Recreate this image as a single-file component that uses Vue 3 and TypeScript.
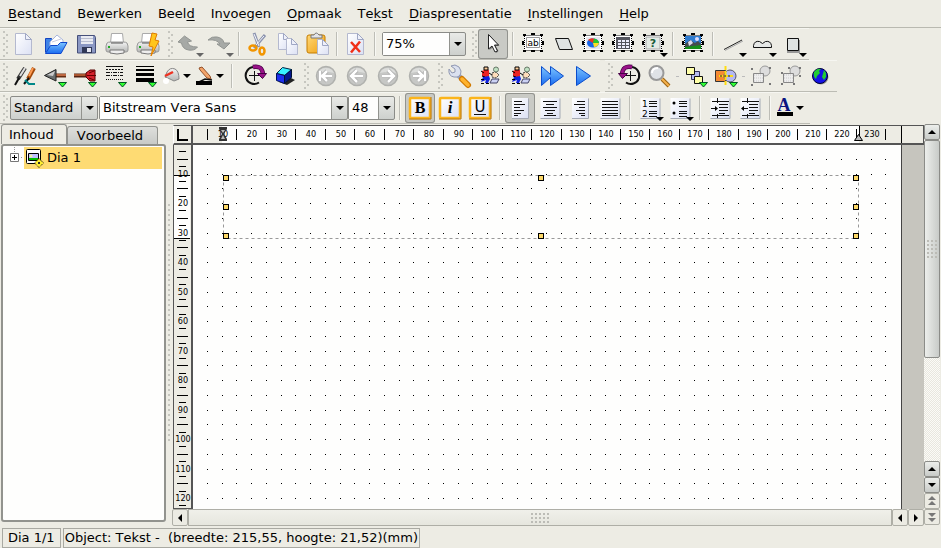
<script setup lang="ts">
import { computed, ref } from 'vue'

interface MenuEntry { before: string; key: string; after: string }
interface Tool {
  kind: 'button' | 'split' | 'sep' | 'gap' | 'dash' | 'zoom' | 'style' | 'font' | 'size'
  icon?: string
  label?: string
  pressed?: boolean
}
interface Group { wide?: boolean; tight?: boolean; spaced?: boolean; tools: Tool[] }

const menus: MenuEntry[] = [
  { before: '', key: 'B', after: 'estand' },
  { before: 'Be', key: 'w', after: 'erken' },
  { before: 'Beel', key: 'd', after: '' },
  { before: 'In', key: 'v', after: 'oegen' },
  { before: '', key: 'O', after: 'pmaak' },
  { before: 'Te', key: 'k', after: 'st' },
  { before: '', key: 'D', after: 'iaspresentatie' },
  { before: '', key: 'I', after: 'nstellingen' },
  { before: '', key: 'H', after: 'elp' },
]

const b = (icon: string, label: string, pressed = false): Tool => ({ kind: 'button', icon, label, pressed })
const split = (icon: string, label: string): Tool => ({ kind: 'split', icon, label })
const sep: Tool = { kind: 'sep' }
const dash: Tool = { kind: 'dash' }

/* Rows hold bars; a bar is one underlined strip made of groups with a grip each. */
const rows: Group[][][] = [
  [[
    { wide: true, tools: [b('new', 'Nieuw'), b('open', 'Openen'), b('save', 'Opslaan'), b('print', 'Afdrukken'), b('quick', 'Direct afdrukken')] },
    { tight: true, tools: [b('undo', 'Ongedaan maken'), b('redo', 'Opnieuw'), sep, b('cut', 'Knippen'), b('copy', 'Kopiëren'), b('paste', 'Plakken'), sep, b('remove', 'Verwijderen'), sep, { kind: 'zoom' }] },
    { spaced: true, tools: [b('pointer', 'Selecteren', true), sep, b('textframe', 'Tekst'), b('shape', 'Autovorm'), b('chart', 'Diagram'), b('table', 'Tabel'), b('object', 'Object'), sep, b('picture', 'Afbeelding'), sep, b('line', 'Lijn'), b('curve', 'Kromme'), b('square', 'Rechthoek')] },
  ]],
  [[
    { tools: [b('brushes', 'Pen en penseel'), b('arrowstart', 'Pijlbegin'), b('arrowend', 'Pijleinde'), b('dashes', 'Lijnstijl'), b('weights', 'Lijndikte'), split('bucket', 'Vulkleur'), split('pen', 'Lijnkleur'), sep, { kind: 'gap' }, b('rotate', 'Draaien'), b('cube', 'Schaduw')] },
    { wide: true, tools: [b('first', 'Eerste dia'), b('prev', 'Vorige dia'), b('next', 'Volgende dia'), b('last', 'Laatste dia')] },
    { wide: true, tools: [b('wrench', 'Instellen'), b('effect', 'Effect'), b('effect', 'Overgang'), b('forward', 'Vanaf begin'), b('play', 'Afspelen')] },
  ], [
    { tools: [b('rotateback', 'Draaien'), b('magnify', 'Zoomen'), dash, b('stack', 'Volgorde'), b('align', 'Uitlijnen'), dash, b('group', 'Groeperen'), b('ungroup', 'Degroeperen'), b('globe', 'Koppeling')] },
  ]],
  [[
    { tools: [{ kind: 'style' }, { kind: 'font' }, { kind: 'size' }, sep, b('bold', 'Vet', true), b('italic', 'Cursief'), b('underline', 'Onderstrepen'), sep, b('left', 'Links', true), b('center', 'Centreren'), b('right', 'Rechts'), b('justify', 'Uitvullen'), sep, b('numbers', 'Nummering'), b('bullets', 'Opsomming'), sep, b('indent', 'Inspringen'), b('outdent', 'Uitspringen'), sep, split('color', 'Tekstkleur')] },
  ]],
]

const down = (x: number, y: number, fill = '#000') =>
  `<path d="M${x - 4} ${y - 2}h8l-4 4z" fill="${fill}"/>`
const green = `<path d="M19.5 21.5h8l-4 4.5z" fill="#3f3" stroke="#052"/>`
const doc = (x: number, y: number, w: number, h: number) =>
  `<path d="M${x + 0.5} ${y + 0.5}h${w - 7}l6 6v${h - 7}h-${w - 1}z" fill="url(#paper)" stroke="#b4b9cf"/><path d="M${x + w - 6.5} ${y + 0.5}v6h6z" fill="#eef0fa" stroke="#9fa7c4"/>`
const frame = `<rect x="6" y="6" width="18" height="15" fill="#fff"/><path d="M5.500 6.500H25M5.500 21.500H25M6.500 5V22M23.500 5V22" stroke="#000" stroke-dasharray="1 1"/><path d="M5 5h3v2H5zM13 4h4v2h-4zM22 5h3v2h-3zM5 21h3v2H5zM13 21h4v2h-4zM22 21h3v2h-3zM4 12h2v4H4zM24 12h2v4h-2z" fill="#000"/>`
const printer = `<path d="M8.500 14l1-9.500h11l1 9.500z" fill="#fff" stroke="#aaa"/><path d="M5 14q1-1 4-1h12q3 0 4 1l1 3v4q0 2-2 2H6q-2 0-2-2v-4z" fill="url(#steel)" stroke="#999"/><path d="M9 14h12" stroke="#555"/><path d="M8 21h14v3q-7 2-14 0z" fill="#eee" stroke="#777"/><path d="M6 18h2" stroke="#2a2" stroke-width="2"/>`
const nav = (d: string) =>
  `<circle cx="16" cy="15" r="9.500" fill="#c6c7c5" stroke="#b0b1ae" stroke-width="1.500"/><path d="M8 12q2-5 8-5 6 0 8 5-8-2-16 0z" fill="#dcdddb"/><path d="${d}" fill="none" stroke="#aaa" stroke-width="4"/><path d="${d}" fill="none" stroke="#fff" stroke-width="2.500"/>`
const fmt = `<rect x="5" y="5" width="20" height="20" rx="1" fill="url(#paper)" stroke="#fbb51c" stroke-width="2.500"/><path d="M4 26h22V4" fill="none" stroke="#b87410"/>`
const sheet = (w: number) =>
  `<path d="M${15 - w / 2} 5h${w}v20h-${w}z" fill="url(#paper)"/><path d="M${15 - w / 2} 25.500h${w + 0.5}v-20" fill="none" stroke="#a4a9b4"/>`
const person = `<path d="M7 10l4-2 3 1v6l-4 2-3-2z" fill="#e22"/><path d="M6 10l3 2M7 15l3 1M14 12l3 2" stroke="#000"/><path d="M9 6h4v3H9z" fill="#fc9" stroke="#000"/><path d="M8 16l6-1 1 3-2 4h-3l1-3-5 2z" fill="#12d"/><path d="M6 18.500h3M6 22.500h3M11 22.500h3" stroke="#000"/><path d="M17 12l4-1 3 3-3 3-4-1z" fill="#fdb" stroke="#333" stroke-dasharray="2 1"/><circle cx="21" cy="8.500" r="2.500" fill="#bfe0c2" stroke="#676"/><path d="M17 18h7l-2 4h-7z" fill="#ccd2f4" stroke="#446"/>`
const rotate = (flip: boolean) =>
  `<g${flip ? ' transform="translate(31 0) scale(-1 1)"' : ''}><path d="M19 21.500A8.500 8.500 0 1 1 14 6" fill="none" stroke="#111" stroke-width="2"/><path d="M13 6q9-2 10 7" fill="none" stroke="#404" stroke-width="4.500"/><path d="M13 6q9-2 10 7" fill="none" stroke="#918" stroke-width="3"/><path d="M17.500 12.500h9l-4 5z" fill="#918" stroke="#404"/><path d="M9 14.500h10M14.500 10v10" stroke="#111"/></g>`
const grouped = (link: string) =>
  `<circle cx="19" cy="10" r="5" fill="#ddd" stroke="#999"/><path d="M7.500 12.500h10v9h-10z" fill="#eee" stroke="#888"/><path d="M8 14h9M8 17h9M8 20h9" stroke="#ccc" stroke-dasharray="1 1"/><path d="${link}" fill="#777"/>`

const icons: Record<string, string> = {
  new: doc(6, 4, 17, 22),
  open: `<path d="M5.500 23.500v-14h6l2 2h7v6" fill="#3f83e6" stroke="#1444c0"/><path d="M10 13l7-7 6 5v7H10z" fill="#fff" stroke="#a8b6dc"/><path d="M12 13l9-3" stroke="#ccd"/><path d="M5.500 24.500l5-8h7l3-3h6.500l-6 11z" fill="url(#blue)" stroke="#1048cc"/>`,
  save: `<path d="M6.500 6.500h17l1 2v15.500h-18z" fill="#8b98c4" stroke="#46507a"/><path d="M10 7h12v8H10z" fill="#e9ebf2"/><path d="M10 9.500h12M10 12.500h12" stroke="#b9bed0"/><path d="M11 18h10v6H11z" fill="#303857"/><path d="M16 19h4v4h-4z" fill="#e6e8f2"/>`,
  print: printer,
  quick: printer + `<path d="M19 4l5 1-2 6 4 1-8 15 2-9-4-1z" fill="#ffc51c" stroke="#e07c00"/>`,
  undo: `<path d="M4 13l6.500-6 7 5-4 1q1 5 10 5-3 4-9 3-6-1-7-7z" fill="#a6a9a6" stroke="#929592"/>` + down(26, 26, '#666'),
  redo: `<path d="M4 11q4-4 9-3 6 1 7 6h6l-6 6-7-5h3q-3-5-12-4z" fill="#a6a9a6" stroke="#929592"/>` + down(26, 26, '#666'),
  cut: `<path d="M12 4l5 14M23 6L12 19" stroke="#8b93ae" stroke-width="3"/><path d="M12 5l5 12M22 7l-8 9" stroke="#f4f6fd"/><ellipse cx="11" cy="19" rx="3.500" ry="2.500" fill="none" stroke="#f29500" stroke-width="2.500"/><ellipse cx="20" cy="22" rx="2.500" ry="3.500" fill="none" stroke="#f29500" stroke-width="2.500"/>`,
  copy: doc(6, 4, 12, 17) + doc(14, 9, 12, 17),
  paste: `<rect x="5" y="6" width="18" height="18" rx="2" fill="url(#amber)" stroke="#c47c00"/><path d="M9 9V6h3q2-4 5 0h3v3z" fill="#e2e4ea" stroke="#777"/>` + doc(15, 10, 12, 16),
  remove: doc(7, 4, 17, 22) + `<path d="M11 13l9 10M20 12.500l-9 11" stroke="#f03018" stroke-width="2.500"/>`,
  pointer: `<path d="M11.500 6v15l4-3 3 6 2-2-3-5h4z" fill="#777"/><path d="M10.500 5.500v14.500l3.500-3 3 6 2.500-1-3-6h4z" fill="#fff" stroke="#222"/>`,
  textframe: frame + `<path d="M8.500 8.500h13v10h-13z" fill="#fff" stroke="#999"/><text x="15" y="17" font-size="9" text-anchor="middle">ab</text>`,
  shape: `<path d="M7.500 9.500h13l4 11h-13z" fill="#dfe3e3" stroke="#111"/>`,
  chart: frame + `<rect x="8" y="8" width="14" height="12" fill="#e8e8ee"/><ellipse cx="15" cy="14" rx="6" ry="4.500" fill="#1664e8"/><path d="M15 14L10 11q3-3 7-1z" fill="#e32"/><path d="M15 14l1-4.500q5 1 5 4.500z" fill="#29c62f"/><path d="M15 14h6q-1 4-5 4z" fill="#fd2"/>`,
  table: frame + `<path d="M8 8h14v12H8z" fill="#54555e"/><path d="M10 11h3v2h-3zM14 11h3v2h-3zM18 11h3v2h-3zM10 14h3v2h-3zM14 14h3v2h-3zM18 14h3v2h-3zM10 17h3v2h-3zM14 17h3v2h-3zM18 17h3v2h-3z" fill="#eef"/>`,
  object: frame + `<rect x="8" y="8" width="14" height="12" fill="#e3eae4" stroke="#aaa"/><text x="15" y="18" font-size="11" font-weight="bold" text-anchor="middle" fill="#175b38">?</text>` + down(26, 26),
  picture: frame + `<path d="M7 7h16v8H7z" fill="#2f7cd0"/><path d="M7 15l5-4 5 3 3-2 3 3v3H7z" fill="#454c50"/><circle cx="19" cy="10" r="2" fill="#ddf"/><path d="M10 13l3-2 2 3-4 3z" fill="#dde"/><path d="M7 18l16-2v4H7z" fill="#15901b"/>`,
  line: `<path d="M6 20.500L24 11" stroke="#222"/><path d="M7 21.500L25 12" stroke="#aaa"/>` + down(25, 26),
  curve: `<path d="M5.500 18.500v-2q1-5 6-4l3 2 3-2q5-1 6 4v2z" fill="#e6e8e6" stroke="#111"/>` + down(25, 26),
  square: `<path d="M21 11v12H9" fill="none" stroke="#999" stroke-width="2"/><path d="M9.500 9.500h11v12h-11z" fill="#dfe3e3" stroke="#111"/>` + down(25, 26),
  brushes: `<path d="M16 7L9 18" stroke="#333" stroke-width="4"/><path d="M16 7l-5 8" stroke="#ddd" stroke-width="2"/><path d="M10 17l-4 7" stroke="#111" stroke-width="2"/><path d="M25 7l-6 11" stroke="#a24a0c" stroke-width="4"/><path d="M24 7l-4 8" stroke="#ff9b52" stroke-width="2"/><path d="M20 17l-5 6" stroke="#111" stroke-width="2"/><path d="M16 19l4 4h6" fill="none" stroke="#088" stroke-width="2"/>`,
  arrowstart: `<path d="M16 14.500h11" stroke="#642c12" stroke-width="4"/><path d="M16 14h11" stroke="#bd6841" stroke-width="2"/><path d="M5.500 14.500L17 8.500v11.500z" fill="#6b7070" stroke="#222"/><path d="M8 14l8-4-2 5z" fill="#ccc"/>` + green,
  arrowend: `<path d="M5 14.500h13" stroke="#532010" stroke-width="4"/><path d="M5 14h13" stroke="#aa552e" stroke-width="2"/><path d="M17 12l4-3h5v11h-5l-4-4z" fill="#d5222d" stroke="#500"/><path d="M18 14.500h9M20 12l5-2M20 17l5 2" stroke="#600"/>` + green,
  dashes: `<path d="M7 5.500h17" stroke="#111"/><path d="M7 8.500h17" stroke="#111" stroke-dasharray="2 1"/><path d="M7 11.500h17M7 14.500h17" stroke="#111" stroke-dasharray="4 1 1 1"/><path d="M7 18.500h17" stroke="#111" stroke-dasharray="1 1"/>` + green,
  weights: `<path d="M7 5.500h18" stroke="#000"/><path d="M7 9h18" stroke="#000" stroke-width="2"/><path d="M7 13.500h18" stroke="#000" stroke-width="3"/><path d="M7 19h18" stroke="#000" stroke-width="4"/>` + green,
  bucket: `<path d="M6 16l2-5q3-5 8-3 4 2 4 10l-5 2-4-2z" fill="url(#steel)" stroke="#888"/><path d="M6 15l8-4" stroke="#e32" stroke-width="2.500"/><circle cx="7" cy="20" r="3" fill="#fff"/>` + down(28, 15),
  pen: `<path d="M6 7l3-1 8 9 1 3-4-1-7-8z" fill="#f3a46a" stroke="#93512a"/><path d="M4 22l8-4 7 1" fill="none" stroke="#111" stroke-width="1.500"/><path d="M3 20h16v4H3z" fill="#000"/>` + down(27, 15),
  rotate: rotate(false),
  rotateback: rotate(true),
  cube: `<path d="M9 21l8 3 8-5-4-2z" fill="#222"/><path d="M6.500 12.500l6-6 9 2-6 6z" fill="#38f1ff" stroke="#024"/><path d="M6.500 12.500l8 2v8l-8-3z" fill="#1d2fee" stroke="#015"/><path d="M14.500 14.500l7-6v8l-7 6z" fill="#06178b" stroke="#013"/>`,
  first: nav('M10 10v10M22 15h-9M17 10l-5 5 5 5'),
  prev: nav('M22 15H11M16 9l-6 6 6 6'),
  next: nav('M10 15h11M16 9l6 6-6 6'),
  last: nav('M22 10v10M10 15h9M15 10l5 5-5 5'),
  wrench: `<path d="M11 11l9 9" stroke="#9aa4bf" stroke-width="5"/><path d="M7 5l4 3v3l-3 1-3-4q-1 7 5 8 7 1 7-6-1-5-6-6z" fill="#dbe1ef" stroke="#9098b2"/><path d="M18 18l6 6" stroke="#d07900" stroke-width="6" stroke-linecap="round"/><path d="M18 18l6 6" stroke="#ffb32e" stroke-width="3.500" stroke-linecap="round"/>`,
  effect: person,
  forward: `<path d="M4.500 5.500v19l9-8v8l13-9.500-13-9.500v8z" fill="url(#blue)" stroke="#0a4ccc"/>`,
  play: `<path d="M8.500 5.500v19l14-9.500z" fill="url(#blue)" stroke="#0a4ccc"/>`,
  magnify: `<path d="M18 18l7 7" stroke="#9c6412" stroke-width="4"/><path d="M18 18l7 7" stroke="#f5b14c" stroke-width="2"/><circle cx="12.500" cy="12" r="7" fill="#dfe2e6" stroke="#999" stroke-width="2"/><path d="M8 12q0-5 6-5" fill="none" stroke="#fff" stroke-width="2"/>`,
  stack: `<path d="M11.500 10.500h8v8h-8z" fill="#b8bdf0" stroke="#335"/><path d="M6.500 6.500h8v7h-8zM14.500 15.500h8v7h-8z" fill="#ffffa8" stroke="#111"/>` + green,
  align: `<path d="M5.500 9.500h10v11h-10z" fill="#f58a34" stroke="#333"/><circle cx="20" cy="15" r="6" fill="#b5b8f3" stroke="#556"/><path d="M9 15h14M15.500 5v20" stroke="#fd1" stroke-width="2" stroke-dasharray="4 1"/><path d="M10 15h11" stroke="#222" stroke-dasharray="2 2"/>` + green,
  group: grouped('M5 7h2v2H5zM23 6h2v2h-2zM5 23h2v2H5zM23 22h2v2h-2z'),
  ungroup: grouped('M5 11h2v2H5zM12 6h2v2h-2zM5 22h2v2H5zM17 22h2v2h-2zM23 6h2v2h-2zM23 14h2v2h-2z'),
  globe: `<circle cx="15" cy="16" r="7.500" fill="#999"/><circle cx="14" cy="15" r="7.500" fill="#1512e6" stroke="#003"/><path d="M8 11q3-4 7-3l-2 2 1 2-3 3-1 3q-3-2-2-7zM18 9l2 3v4l-2 3-2-3z" fill="#21cc33"/>`,
  bold: fmt + `<text x="15" y="20" class="serif" font-size="16" font-weight="bold" text-anchor="middle">B</text>`,
  italic: fmt + `<text x="15" y="20" class="serif" font-size="17" font-weight="bold" font-style="italic" text-anchor="middle">i</text>`,
  underline: fmt + `<text x="15" y="19" font-size="15" text-anchor="middle">U</text><path d="M9 21.500h12" stroke="#111"/>`,
  left: sheet(16) + `<path d="M9 8.500h8M9 11.500h11M9 14.500h6M9 17.500h10M9 20.500h7M9 22.500h4" stroke="#111"/>`,
  center: sheet(19) + `<path d="M8 8.500h14M11 11.500h8M8 14.500h14M10 17.500h10M12 20.500h6M9 22.500h12" stroke="#111"/>`,
  right: sheet(16) + `<path d="M12 8.500h8M9 11.500h11M14 14.500h6M11 17.500h9M14 20.500h6M16 22.500h4" stroke="#111"/>`,
  justify: sheet(19) + `<path d="M7 8.500h16M7 11.500h16M7 14.500h16M7 17.500h16M7 20.500h16M7 22.500h16" stroke="#111"/>`,
  numbers: sheet(19) + `<text x="7" y="14" font-size="9">1</text><text x="7" y="24" font-size="9">2</text><path d="M14 8.500h8M14 10.500h8M14 13.500h8M14 18.500h8M14 20.500h8M14 23.500h8" stroke="#111"/>` + down(25, 26),
  bullets: sheet(19) + `<circle cx="9" cy="10" r="1.500"/><circle cx="9" cy="20" r="1.500"/><path d="M14 8.500h8M14 10.500h8M14 13.500h8M14 18.500h8M14 20.500h8M14 23.500h8" stroke="#111"/>` + down(25, 26),
  indent: sheet(19) + `<path d="M12.500 5v5M12.500 21v4M7 8.500h17M7 22.500h17M14 11.500h9M14 14.500h9M14 17.500h9M14 20.500h6M6 15.500h6" stroke="#111"/><path d="M10 13l3 2.500-3 2.500z"/>`,
  outdent: sheet(19) + `<path d="M12.500 5v5M12.500 21v4M7 8.500h17M7 22.500h17M14 11.500h9M14 14.500h9M14 17.500h9M14 20.500h6M7 15.500h6" stroke="#111"/><path d="M9 13l-3 2.500 3 2.500z"/>`,
  color: `<text x="9" y="18" class="serif" font-size="18" font-weight="bold" text-anchor="middle" fill="#0b1480">A</text><path d="M2 19h16v4H2z"/>` + down(25, 15),
}

const zoom = ref('75%')
const style = ref('Standard')
const font = ref('Bitstream Vera Sans')
const size = ref('48')
const tab = ref<'inhoud' | 'voorbeeld'>('inhoud')

/* Geometry of the page at 75%: one centimetre spans 29.5 pixels. */
const CM = 29.5
const range = (from: number, to: number) => Array.from({ length: to - from + 1 }, (_, i) => from + i)
const hLabels = range(1, 23).map((n) => ({ text: String(n * 10), x: Math.round(n * CM) }))
const hTicks = range(0, 23).map((n) => Math.round(n * CM + CM / 2) - 1)
const vLabels = range(1, 12).map((n) => ({ text: String(n * 10), y: Math.round(n * CM - 1) }))
const vTicks = range(0, 11).map((n) => Math.round(n * CM + CM / 2) - 1)
const vMinor = range(0, 24).map((n) => Math.round((n * CM) / 2 + CM / 4) - 1)
const dots = computed(() => {
  let d = ''
  for (let r = 1; r < 36; r++)
    for (let c = 1; c < 48; c++)
      d += `M${Math.round((c * CM) / 2 - 0.9)} ${Math.round((r * CM) / 2 - 0.9)}h1v1h-1z`
  return d
})
const box = { left: 30, top: 30, width: 635, height: 63 }
const handles = [30, 345, 660].flatMap((x) =>
  [30, 59, 88].filter((y) => x !== 345 || y !== 59).map((y) => ({ x, y })))
</script>

<template>
  <div class="app">
    <svg class="defs" aria-hidden="true">
      <defs>
        <linearGradient id="paper" x1="0" y1="0" x2="1" y2="1"><stop offset="0" stop-color="#fff" /><stop offset="1" stop-color="#dce1f4" /></linearGradient>
        <linearGradient id="steel" x1="0" y1="0" x2="0" y2="1"><stop offset="0" stop-color="#f4f4f4" /><stop offset="1" stop-color="#b4b6b4" /></linearGradient>
        <linearGradient id="blue" x1="0" y1="0" x2="0" y2="1"><stop offset="0" stop-color="#7cc4ff" /><stop offset="1" stop-color="#1a6cf0" /></linearGradient>
        <linearGradient id="amber" x1="0" y1="0" x2="1" y2="1"><stop offset="0" stop-color="#ffd878" /><stop offset="1" stop-color="#f0a010" /></linearGradient>
      </defs>
    </svg>

    <nav class="menu">
      <button v-for="m in menus" :key="m.key" type="button">{{ m.before }}<u>{{ m.key }}</u>{{ m.after }}</button>
    </nav>

    <div v-for="(bars, r) in rows" :key="r" class="row">
      <div v-for="(groups, i) in bars" :key="i" class="bar">
        <div v-for="(g, j) in groups" :key="j" class="group" :class="{ wide: g.wide, tight: g.tight, spaced: g.spaced }">
          <span class="grip"></span>
          <template v-for="(t, k) in g.tools" :key="k">
            <span v-if="t.kind === 'sep'" class="sep"></span>
            <span v-else-if="t.kind === 'gap'" class="gap"></span>
            <span v-else-if="t.kind === 'dash'" class="dash"></span>
            <label v-else-if="t.kind === 'zoom'" class="combo light zoom">
              <select v-model="zoom" aria-label="Zoom"><option>75%</option><option>100%</option></select>
              <svg viewBox="0 0 8 4"><path d="M0 0h8L4 4z" /></svg>
            </label>
            <label v-else-if="t.kind === 'style'" class="combo style">
              <select v-model="style" aria-label="Stijl"><option>Standard</option></select>
              <svg viewBox="0 0 8 4"><path d="M0 0h8L4 4z" /></svg>
            </label>
            <label v-else-if="t.kind === 'font'" class="combo light font">
              <select v-model="font" aria-label="Lettertype"><option>Bitstream Vera Sans</option></select>
              <svg viewBox="0 0 8 4"><path d="M0 0h8L4 4z" /></svg>
            </label>
            <label v-else-if="t.kind === 'size'" class="combo light size">
              <select v-model="size" aria-label="Grootte"><option>48</option></select>
              <svg viewBox="0 0 8 4"><path d="M0 0h8L4 4z" /></svg>
            </label>
            <button v-else type="button" class="tool" :class="{ split: t.kind === 'split', pressed: t.pressed }" :aria-label="t.label">
              <svg class="icon" :viewBox="t.kind === 'split' ? '0 0 34 30' : '0 0 30 30'" v-html="icons[t.icon ?? '']"></svg>
            </button>
          </template>
        </div>
      </div>
    </div>

    <main class="work">
      <aside class="side">
        <div class="tabs">
          <button type="button" :class="{ on: tab === 'inhoud' }" @click="tab = 'inhoud'">Inhoud</button>
          <button type="button" :class="{ on: tab === 'voorbeeld' }" @click="tab = 'voorbeeld'">Voorbeeld</button>
        </div>
        <div class="tree">
          <div class="node">
            <button type="button" class="expander" aria-label="Uitklappen">
              <svg viewBox="0 0 20 22"><path d="M11.500 0v5M18 10.500h2" stroke="#999" stroke-dasharray="1 1" /><path d="M7.500 6.500h8v8h-8z" fill="#fff" stroke="#777" /><path d="M9 10.500h5M11.500 8v5" stroke="#000" /></svg>
            </button>
            <span class="entry">
              <svg viewBox="0 0 20 20"><rect x="2.500" y="1.500" width="14" height="14" rx="1" fill="#fff" stroke="#000" /><path d="M4.500 5.500h10v7h-10z" fill="#c0c0ff" stroke="#000" /><path d="M5 10h9v2H5z" fill="#0b0" /><path d="M7 6.500v3M5.500 8h3" stroke="#ff8" /><path d="M15 10.500l4.500 4.500-4.500 4.500-4.500-4.500z" fill="#fe3" stroke="#000" stroke-dasharray="1 1" /><path d="M14 14h2v2h-2z" fill="#332" /></svg>
              Dia 1
            </span>
          </div>
        </div>
      </aside>
      <div class="splitter"></div>

      <section class="editor">
        <div class="corner"><svg viewBox="0 0 18 17"><path d="M4 3v11h10" fill="none" stroke="#000" stroke-width="2" /></svg></div>
        <div class="hruler">
          <svg width="731" height="17">
            <rect x="29" y="0" width="637" height="17" fill="#fefefd" />
            <text v-for="l in hLabels" :key="l.text" :x="l.x" y="11" text-anchor="middle">{{ l.text }}</text>
            <rect v-for="x in hTicks" :key="x" :x="x" y="3" width="1" height="11" />
            <rect x="708" y="0" width="1" height="17" />
            <path d="M26 1h8v2l-3 5 3 5v2h-8v-2l3-5-3-5z" fill="#333" /><path d="M28 4h4l-2 3zM30 9l2 4h-4z" fill="#bbb" />
            <rect x="666" y="0" width="1" height="10" /><path d="M665.500 8.500l4 6h-8z" fill="#bbb" stroke="#000" />
          </svg>
        </div>
        <div class="vruler">
          <svg width="16" height="363">
            <rect x="0" y="30" width="16" height="64" fill="#fefefd" />
            <text v-for="l in vLabels" :key="l.text" x="9" :y="l.y + 3" text-anchor="middle">{{ l.text }}</text>
            <rect v-for="y in vTicks" :key="y" x="3" :y="y" width="11" height="1" />
            <rect v-for="y in vMinor" :key="y" x="5" :y="y" width="7" height="1" />
            <rect x="0" y="30" width="16" height="1" /><rect x="0" y="93" width="16" height="1" />
          </svg>
        </div>
        <div class="canvas">
          <div class="page">
            <svg class="scene" width="708" height="532">
              <path :d="dots" fill="#000" />
              <rect :x="box.left + 0.5" :y="box.top + 0.5" :width="box.width" :height="box.height" fill="none" stroke="#999" stroke-dasharray="3 3" />
              <rect v-for="h in handles" :key="`${h.x}-${h.y}`" :x="h.x + 0.5" :y="h.y + 0.5" width="5" height="5" fill="#fdd867" stroke="#000" />
            </svg>
          </div>
        </div>
        <div class="hscroll">
          <button type="button" class="flat" aria-label="Naar links"><svg viewBox="0 0 8 8"><path d="M6 0v8L2 4z" /></svg></button>
          <div class="hthumb"><span class="dots"></span></div>
          <button type="button" class="flat" aria-label="Links"><svg viewBox="0 0 8 8"><path d="M6 0v8L2 4z" /></svg></button>
          <button type="button" class="flat" aria-label="Rechts"><svg viewBox="0 0 8 8"><path d="M2 0v8l4-4z" /></svg></button>
        </div>
      </section>

      <div class="vscroll">
        <button type="button" aria-label="Omhoog"><svg viewBox="0 0 8 8"><path d="M0 6h8L4 2z" /></svg></button>
        <div class="track"><div class="vthumb"><span class="dots"></span></div></div>
        <button type="button" aria-label="Omhoog"><svg viewBox="0 0 8 8"><path d="M0 6h8L4 2z" /></svg></button>
        <button type="button" aria-label="Omlaag"><svg viewBox="0 0 8 8"><path d="M0 2h8L4 6z" /></svg></button>
        <button type="button" class="flat" aria-label="Vorige dia"><svg viewBox="0 0 8 8"><path d="M0 3h8L4-1zM0 8h8L4 4z" fill="#777" /></svg></button>
        <button type="button" class="flat" aria-label="Volgende dia"><svg viewBox="0 0 8 8"><path d="M0 0h8L4 4zM0 5h8L4 9z" fill="#777" /></svg></button>
      </div>
    </main>

    <footer class="status">
      <span class="cell first">Dia 1/1</span>
      <span class="cell">Object: Tekst -&nbsp; (breedte: 215,55, hoogte: 21,52)(mm)</span>
    </footer>
  </div>
</template>

<style>
html, body { margin: 0; background: #edece4; }
</style>

<style scoped>
.app {
  display: flex;
  flex-direction: column;
  height: 100vh;
  overflow: hidden;
  background: #edece4;
  color: #000;
  font: 13px/16px "DejaVu Sans", sans-serif;
  font-kerning: none;
}
button { margin: 0; padding: 0; border: 0; background: none; color: inherit; font: inherit; font-kerning: none; }
svg { display: block; overflow: visible; }
.defs { position: absolute; width: 0; height: 0; }

.menu {
  display: flex;
  flex: none;
  gap: 16px;
  height: 27px;
  padding: 0 8px;
  border-bottom: 1px solid #b9b9b0;
}
.menu button { white-space: nowrap; }
.menu u { text-underline-offset: 2px; text-decoration-skip-ink: none; }

.row { display: flex; flex: none; gap: 5px; height: 32px; }
.bar {
  display: flex;
  box-sizing: border-box;
  border-top: 1px solid #f6f6f1;
  border-bottom: 1px solid #bcbcb4;
}
.group { display: flex; align-items: center; margin-right: 1px; }
.group.spaced { margin-left: 1px; }
.grip {
  width: 6px;
  height: 26px;
  margin-left: 3px;
  background: conic-gradient(at 2px 2px, transparent 75%, #c6c6bf 0) 0 0 / 6px 6px,
    conic-gradient(at 2px 2px, transparent 75%, #c6c6bf 0) 3px 3px / 6px 6px;
}
.tool {
  flex: none;
  box-sizing: border-box;
  width: 30px;
  height: 30px;
}
.wide .tool { width: 31px; }
.tool.split { width: 34px; }
.icon { width: 30px; height: 30px; }
.split .icon { width: 34px; }
.tool.pressed {
  border-radius: 3px;
  background: #c9cac5;
  box-shadow: inset 0 0 0 1px #92938e;
}
.icon :deep(.serif) { font-family: "Liberation Serif", serif; }
.sep {
  width: 10px;
  height: 24px;
  background: linear-gradient(90deg, #bdbdb6 0 1px, #f8f8f4 1px 2px) 4px 0 / 2px 100% no-repeat;
}
.tight .sep { width: 8px; }
.gap { width: 3px; }
.dash { width: 6px; height: 1px; background: linear-gradient(#bbb, #bbb) 2px 0 / 3px 1px no-repeat; }

.combo {
  position: relative;
  flex: none;
  box-sizing: border-box;
  height: 24px;
  border: 1px solid #8b8c88;
  border-radius: 2px;
  background: linear-gradient(#e9eae7, #cdd0cd);
}
.combo select {
  box-sizing: border-box;
  width: 100%;
  height: 100%;
  padding: 0 18px 0 3px;
  border: 0;
  outline: 0;
  background: linear-gradient(#92938e, #92938e) right 15px top / 1px 100% no-repeat;
  color: #000;
  font: inherit;
  font-kerning: none;
  appearance: none;
}
.combo.light select {
  background: linear-gradient(90deg, #fefefd calc(100% - 16px), #92938e calc(100% - 16px) calc(100% - 15px), transparent calc(100% - 15px));
}
.combo svg { position: absolute; right: 3px; top: 9px; width: 8px; height: 4px; pointer-events: none; }
.zoom { width: 84px; margin: 0 1px 0 4px; }
.style { width: 88px; margin: 0 1px; }
.font { width: 249px; }
.size { width: 47px; }

.work { display: flex; flex: 1; min-height: 0; }
.side { display: flex; flex: none; flex-direction: column; width: 166px; padding-bottom: 4px; box-sizing: border-box; }
.tabs { display: flex; align-items: flex-end; height: 20px; padding-left: 1px; }
.tabs button {
  box-sizing: border-box;
  height: 18px;
  padding: 0 14px 0 9px;
  border: 1px solid #92938e;
  border-bottom: 0;
  border-radius: 3px 3px 0 0;
  background: linear-gradient(#dedfdc, #c8cac7);
}
.tabs button.on { height: 20px; padding: 0 12px 0 7px; background: #edece4; }
.tree {
  flex: 1;
  margin: 0 0 0 1px;
  padding: 1px 2px 0 1px;
  border: 2px solid #92938e;
  border-radius: 3px;
  background: #fefefd;
}
.node { display: flex; height: 22px; }
.expander { width: 20px; flex: none; }
.expander svg { width: 20px; height: 22px; margin-left: -1px; }
.entry { display: flex; flex: 1; align-items: center; gap: 3px; background: #fedb73; }
.entry svg { width: 20px; height: 20px; }
.splitter {
  width: 2px;
  flex: none;
  margin: 80px 2px 84px;
  background: conic-gradient(at 2px 2px, transparent 75%, #c6c6bf 0) 0 0 / 2px 5px;
}

.editor {
  display: grid;
  flex: 1;
  grid-template-columns: 21px minmax(0, 1fr);
  grid-template-rows: 21px minmax(0, 1fr) 17px;
  min-width: 0;
}
.corner, .hruler { margin-top: 1px; border-top: 1px solid #555; border-bottom: 2px solid #555; }
.corner { margin-left: 1px; border-left: 1px solid #fff; border-right: 2px solid #555; background: #edece4; }
.corner svg { width: 18px; height: 17px; }
.hruler, .vruler { overflow: hidden; background: #edece4; font: 9px "DejaVu Sans Condensed", "DejaVu Sans", sans-serif; }
.hruler { border-right: 1px solid #555; }
.vruler { margin-left: 1px; border-left: 1px solid #555; border-right: 2px solid #555; border-bottom: 1px solid #555; }
.canvas { overflow: hidden; background: #c6c5be; }
.page { width: 708px; height: 532px; border-right: 1px solid #444; background: #fefefd; }

.hscroll { display: flex; grid-column: 1 / -1; }
.hthumb {
  display: flex;
  flex: 1;
  align-items: center;
  justify-content: center;
  border: 1px solid #aeaea6;
  background: linear-gradient(#f0f0ea, #e6e6de);
}
.vscroll { display: flex; flex: none; flex-direction: column; width: 17px; padding-bottom: 1px; }
.hscroll button, .vscroll button {
  display: grid;
  flex: none;
  box-sizing: border-box;
  width: 16px;
  height: 16px;
  place-items: center;
  border: 1px solid #8b8c88;
  border-radius: 2px;
  background: linear-gradient(#eceeeb, #c8cbc8);
}
.hscroll button { height: 17px; }
.hscroll .flat, .vscroll .flat { border-color: #aeaea6; background: #ecebe3; }
.hscroll svg, .vscroll svg { width: 8px; height: 8px; }
.track {
  flex: 1;
  width: 16px;
  background: repeating-conic-gradient(#e8e7df 0 25%, #fbfbf7 0 50%) 0 0 / 2px 2px;
}
.vthumb {
  display: grid;
  box-sizing: border-box;
  height: 68%;
  place-items: center;
  border: 1px solid #8b8c88;
  border-radius: 2px;
  background: linear-gradient(90deg, #eceeeb, #c8cbc8);
}
.dots { background: conic-gradient(at 2px 2px, transparent 75%, #bcbcb6 0) 0 0 / 4px 4px; }
.hthumb .dots { width: 18px; height: 10px; }
.vthumb .dots { width: 10px; height: 18px; }

.status { display: flex; flex: none; gap: 2px; height: 20px; padding: 2px 2px 0; }
.cell {
  box-sizing: border-box;
  height: 20px;
  padding: 1px 1px;
  border: 1px solid #a9a9a2;
  white-space: nowrap;
}
.cell.first { padding: 1px 5px; }
</style>
